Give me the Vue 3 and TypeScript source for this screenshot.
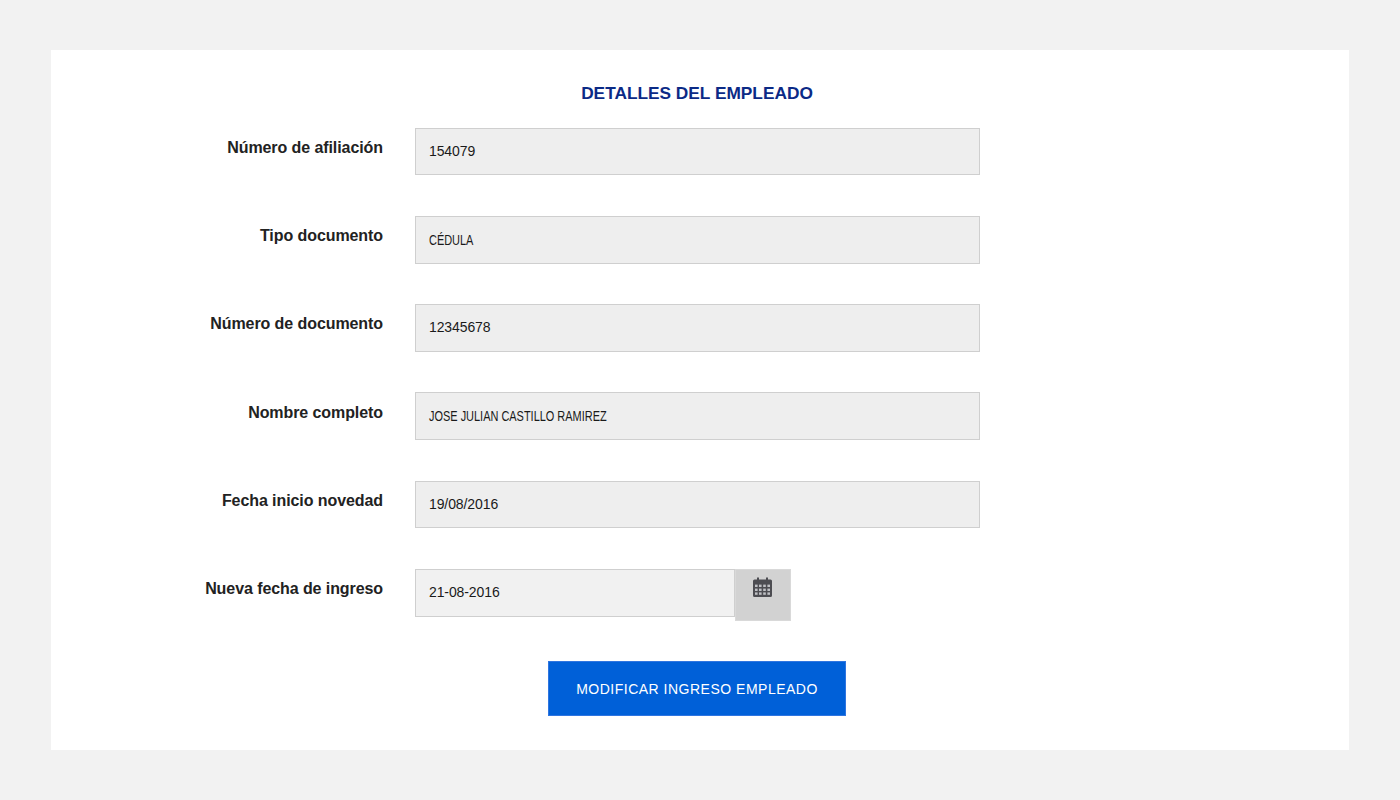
<script setup lang="ts">
interface Field { label: string; value: string; tight?: boolean }
const fields: Field[] = [
  { label: 'Número de afiliación', value: '154079' },
  { label: 'Tipo documento', value: 'CÉDULA', tight: true },
  { label: 'Número de documento', value: '12345678' },
  { label: 'Nombre completo', value: 'JOSE JULIAN CASTILLO RAMIREZ', tight: true },
  { label: 'Fecha inicio novedad', value: '19/08/2016' },
]
</script>

<template>
  <main class="page">
    <section class="card">
      <h1 class="title">DETALLES DEL EMPLEADO</h1>
      <div class="form">
        <div v-for="f in fields" :key="f.label" class="row">
          <label class="label">{{ f.label }}</label>
          <div class="field"><span :class="{ tight: f.tight }">{{ f.value }}</span></div>
        </div>
        <div class="row">
          <label class="label">Nueva fecha de ingreso</label>
          <div class="date">
            <div class="field editable">21-08-2016</div>
            <div class="addon">
              <svg width="19" height="20" viewBox="0 0 19 20" aria-hidden="true">
                <path fill="#4d4d52" d="M1.5 2.5H4V.6h2v1.9h7V.6h2v1.9h2.5A1.5 1.5 0 0 1 19 4v14.5a1.5 1.5 0 0 1-1.5 1.5h-16A1.5 1.5 0 0 1 0 18.5V4a1.5 1.5 0 0 1 1.5-1.5Z" />
                <g fill="#bfc0c4">
                  <rect x="2" y="7.6" width="2.6" height="2.4" /><rect x="6" y="7.6" width="2.6" height="2.4" /><rect x="10.2" y="7.6" width="2.6" height="2.4" /><rect x="14.4" y="7.6" width="2.6" height="2.4" />
                  <rect x="2" y="11.6" width="2.6" height="2.4" /><rect x="6" y="11.6" width="2.6" height="2.4" /><rect x="10.2" y="11.6" width="2.6" height="2.4" /><rect x="14.4" y="11.6" width="2.6" height="2.4" />
                  <rect x="2" y="15.4" width="2.6" height="2.4" /><rect x="6" y="15.4" width="2.6" height="2.4" /><rect x="10.2" y="15.4" width="2.6" height="2.4" /><rect x="14.4" y="15.4" width="2.6" height="2.4" />
                </g>
              </svg>
            </div>
          </div>
        </div>
      </div>
      <div class="actions">
        <button class="submit" type="button">MODIFICAR INGRESO EMPLEADO</button>
      </div>
    </section>
  </main>
</template>

<style scoped>
.page {
  box-sizing: border-box;
  height: 800px;
  padding: 50px 51px;
  background: #f2f2f2;
  font-family: "Liberation Sans", Arial, sans-serif;
}
.card {
  box-sizing: border-box;
  height: 700px;
  padding: 32px 6px 0 0;
  background: #fff;
}
.title {
  margin: 0 0 23.8px;
  height: 22px;
  font-size: 17.3px;
  line-height: 22px;
  font-weight: 700;
  text-align: center;
  color: #0b2a86;
}
.form {
  display: flex;
  flex-direction: column;
  gap: 40.6px;
}
.row {
  display: grid;
  grid-template-columns: 332px 565px;
  column-gap: 32px;
  align-items: start;
  height: 47.6px;
}
.label {
  padding-top: 11.3px;
  font-size: 16px;
  line-height: 18px;
  font-weight: 700;
  letter-spacing: -0.08px;
  text-align: right;
  color: #222;
}
.field {
  box-sizing: border-box;
  height: 47.6px;
  padding-left: 13px;
  border: 1px solid #cfcfcf;
  background: #eee;
  font-size: 14px;
  line-height: 45.5px;
  letter-spacing: -0.1px;
  color: #1a1a1a;
}
.tight {
  display: inline-block;
  transform: translateY(1px) scaleX(0.755);
  transform-origin: left center;
  font-size: 14.5px;
  letter-spacing: 0;
}
.date {
  display: flex;
  align-items: flex-start;
}
.editable {
  width: 320px;
  height: 48px;
  background: #f1f1f1;
}
.addon {
  box-sizing: border-box;
  display: flex;
  justify-content: center;
  width: 56px;
  height: 52px;
  padding: 7px 2px 0 0;
  border: 1px solid #d9d9d9;
  background: #d2d2d2;
}
.actions {
  display: flex;
  justify-content: center;
  margin-top: 45px;
}
.submit {
  box-sizing: border-box;
  width: 298px;
  height: 55px;
  padding: 1px 0 0;
  border: 1px solid #2f75e0;
  border-radius: 0;
  background: #0060d8;
  color: #fff;
  font-family: "Liberation Sans", Arial, sans-serif;
  font-size: 14px;
  letter-spacing: 0.5px;
}
</style>
